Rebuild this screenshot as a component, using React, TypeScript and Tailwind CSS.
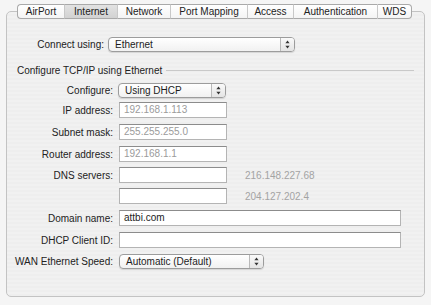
import React from "react";

const TABS = [
  { label: "AirPort", w: 47 },
  { label: "Internet", w: 53, active: true },
  { label: "Network", w: 53 },
  { label: "Port Mapping", w: 77 },
  { label: "Access", w: 46 },
  { label: "Authentication", w: 84 },
  { label: "WDS", w: 35 },
];

function Arrows() {
  return (
    <svg width="5" height="9" viewBox="0 0 5 9">
      <path d="M2.5 0.5 L4.6 3.3 L0.4 3.3 Z" fill="#333" />
      <path d="M2.5 8.5 L4.6 5.7 L0.4 5.7 Z" fill="#333" />
    </svg>
  );
}

function Popup({ value, width }: { value: string; width: number }) {
  return (
    <div
      className="flex h-[15px] items-stretch rounded-[4px] border border-[#9c9c9c] bg-gradient-to-b from-white to-[#f1f1f1] shadow-[0_1px_1px_rgba(0,0,0,0.12)]"
      style={{ width }}
    >
      <span className="flex-1 truncate pl-[6px] leading-[13px] text-[#1c1c1c]">{value}</span>
      <span className="flex w-[14px] items-center justify-center rounded-r-[3px] border-l border-[#b9b9b9] bg-gradient-to-b from-[#fafafa] to-[#e4e4e4]">
        <Arrows />
      </span>
    </div>
  );
}

function Field({ value, width, dim }: { value?: string; width: number; dim?: boolean }) {
  return (
    <div
      className={`h-[16px] border border-[#b4b4b4] border-t-[#8c8c8c] bg-white pl-[4px] leading-[14px] ${dim ? "text-[#9b9b9b]" : "text-[#1c1c1c]"}`}
      style={{ width }}
    >
      {value}
    </div>
  );
}

function Row({ label, top, children }: { label: string; top: number; children: React.ReactNode }) {
  return (
    <div className="flex h-[16px] items-center" style={{ marginTop: top }}>
      <div className="flex w-[97px] shrink-0 justify-end whitespace-nowrap pr-[1px] text-[#222]">{label}</div>
      <div className="ml-[5px] flex items-center">{children}</div>
    </div>
  );
}

export default function App() {
  return (
    <div
      className="h-[305px] w-[431px] overflow-hidden bg-[#f5f5f5] pt-[4px] text-[10px]"
      style={{ fontFamily: '"Liberation Sans", Arial, sans-serif' }}
    >
      <div className="relative z-10 ml-[17px] flex h-[15px]">
        {TABS.map((t, i) => (
          <div
            key={t.label}
            className={`flex items-center justify-center border-y border-[#a9a9a9] leading-none text-[#222] ${
              t.active ? "bg-gradient-to-b from-[#e2e2e2] to-[#d2d2d2]" : "bg-gradient-to-b from-white to-[#f4f4f4]"
            } ${i === 0 ? "rounded-l-[4px] border-l" : "border-l border-l-[#c8c8c8]"} ${
              i === TABS.length - 1 ? "rounded-r-[4px] border-r border-r-[#a9a9a9]" : ""
            }`}
            style={{ width: t.w }}
          >
            {t.label}
          </div>
        ))}
      </div>

      <div className="-mt-[8px] ml-[6px] h-[286px] w-[419px] rounded-[5px] border border-[#c3c3c3] bg-[repeating-linear-gradient(0deg,#eeeeee_0px,#eeeeee_2px,#f1f1f1_2px,#f1f1f1_4px)] pl-[10px]">
        <div className="mt-[25px] flex h-[15px] items-center">
          <span className="w-[87px] text-right text-[#222]">Connect using:</span>
          <div className="ml-[4px]">
            <Popup value="Ethernet" width={187} />
          </div>
        </div>

        <div className="mt-[12px] flex h-[12px] items-center pr-[10px]">
          <span className="text-[#222]">Configure TCP/IP using Ethernet</span>
          <div className="ml-[4px] h-px flex-1 bg-[#c9c9c9]" />
        </div>

        <Row label="Configure:" top={6}>
          <div className="-ml-[1px]">
            <Popup value="Using DHCP" width={108} />
          </div>
        </Row>
        <Row label="IP address:" top={4}>
          <Field value="192.168.1.113" width={108} dim />
        </Row>
        <Row label="Subnet mask:" top={6}>
          <Field value="255.255.255.0" width={108} dim />
        </Row>
        <Row label="Router address:" top={6}>
          <Field value="192.168.1.1" width={108} dim />
        </Row>
        <Row label="DNS servers:" top={5}>
          <Field width={108} />
          <span className="ml-[18px] text-[#a3a3a3]">216.148.227.68</span>
        </Row>
        <Row label="" top={5}>
          <Field width={108} />
          <span className="ml-[18px] text-[#a3a3a3]">204.127.202.4</span>
        </Row>
        <Row label="Domain name:" top={6}>
          <Field value="attbi.com" width={282} />
        </Row>
        <Row label="DHCP Client ID:" top={6}>
          <Field width={282} />
        </Row>
        <Row label="WAN Ethernet Speed:" top={5}>
          <Popup value="Automatic (Default)" width={145} />
        </Row>
      </div>
    </div>
  );
}
